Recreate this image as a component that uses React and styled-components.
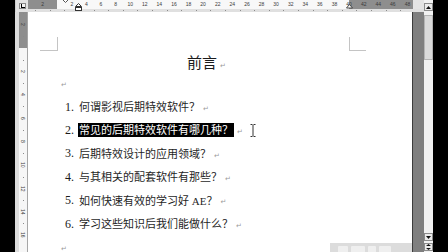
import React from "react";
import styled, { createGlobalStyle } from "styled-components";

const GlobalStyle = createGlobalStyle`
  html, body {
    margin: 0;
    padding: 0;
    background: #000;
  }
  body {
    width: 448px;
    height: 252px;
    overflow: hidden;
    font-family: "Liberation Serif", "Noto Sans CJK SC", serif;
  }
`;

const UNIT = 7.3;
const VUNIT = 11.7;

const Screen = styled.div`
  width: 448px;
  height: 252px;
  display: flex;
  background: #000;
  overflow: hidden;
`;

const SideBlack = styled.div`
  flex: none;
  width: ${(p) => p.w}px;
  background: #000;
`;

const Workspace = styled.div`
  flex: none;
  width: 409px;
  display: flex;
  flex-direction: column;
`;

const RulerBar = styled.div`
  flex: none;
  height: 12px;
  display: flex;
`;

const Corner = styled.div`
  flex: none;
  width: 13px;
  background: #e2e2e2;
  border-left: 1px solid #cfcfcf;
  box-sizing: border-box;
  display: flex;
  justify-content: center;
  padding-top: 3px;
`;

const TabSelector = styled.div`
  width: 7px;
  height: 6px;
  box-sizing: border-box;
  border: 1px solid #8a8a8a;
  background: #f4f4f4;
  position: relative;
  &::after {
    content: "";
    position: absolute;
    left: 1px;
    top: 0px;
    width: 3px;
    height: 3px;
    border-left: 1px solid #000;
    border-bottom: 1px solid #000;
  }
`;

const HRuler = styled.div`
  flex: 1;
  position: relative;
  overflow: hidden;
  display: flex;
  flex-direction: column;
  background: #e4e4e4;
`;

const Band = styled.div`
  height: 8.5px;
  display: flex;
  background: linear-gradient(
    to right,
    #8e8e8e 0 29.5px,
    #f8f8f8 29.5px 321.5px,
    #8e8e8e 321.5px 385px,
    #e4e4e4 385px
  );
`;

const Strip = styled.div`
  height: 3.5px;
  display: flex;
  background: #e0e0e0;
`;

const RulerCell = styled.div`
  flex: none;
  width: ${(p) => p.w}px;
  display: flex;
  justify-content: center;
  align-items: center;
  font-family: "Liberation Sans", Arial, sans-serif;
  font-size: 5px;
  line-height: 8px;
  color: #3a3a3a;
`;

const TickCell = styled.div`
  flex: none;
  width: ${(p) => p.w}px;
  position: relative;
  &::before {
    content: "";
    position: absolute;
    left: 0;
    top: 1px;
    width: 1px;
    height: 1.5px;
    background: ${(p) => (p.tick ? "#8a8a8a" : "transparent")};
  }
`;

const Marker = styled.svg`
  position: absolute;
  left: ${(p) => p.x}px;
  top: ${(p) => p.y}px;
`;

const Body = styled.div`
  flex: 1;
  display: flex;
  min-height: 0;
`;

const VRuler = styled.div`
  flex: none;
  width: 8px;
  border-left: 4px solid #dcdcdc;
  border-right: 1px solid #a6a6a6;
  background: linear-gradient(to bottom, #8e8e8e 0 36px, #f6f6f6 36px);
  display: flex;
  flex-direction: column;
  padding-top: 0.9px;
  overflow: hidden;
`;

const VCell = styled.div`
  flex: none;
  height: ${VUNIT * 2}px;
  display: flex;
  align-items: center;
  justify-content: center;
  position: relative;
  font-family: "Liberation Sans", Arial, sans-serif;
  font-size: 5px;
  color: #3a3a3a;
  writing-mode: vertical-rl;
  &::before {
    content: "";
    position: absolute;
    top: 0;
    left: 3.5px;
    width: 1.5px;
    height: 1px;
    background: #8a8a8a;
  }
`;

const Page = styled.div`
  flex: none;
  width: 384px;
  background: #fff;
  position: relative;
  overflow: hidden;
  padding: 34px 0 0 30px;
  box-sizing: border-box;
`;

const Content = styled.div`
  width: 291px;
  position: relative;
  &::before {
    content: "";
    position: absolute;
    left: -18px;
    top: -14px;
    width: 17px;
    height: 13px;
    border-right: 1px solid #c4c4c4;
    border-bottom: 1px solid #c4c4c4;
  }
  &::after {
    content: "";
    position: absolute;
    left: 100%;
    top: -14px;
    width: 16px;
    height: 13px;
    border-left: 1px solid #c4c4c4;
    border-bottom: 1px solid #c4c4c4;
  }
`;

const Title = styled.div`
  margin-top: 5px;
  height: 21px;
  line-height: 21px;
  text-align: center;
  padding-left: 6px;
  font-family: "Noto Sans CJK SC", "Liberation Sans", sans-serif;
  font-size: 15px;
  color: #1a1a1a;
`;

const Line = styled.div`
  height: 23.4px;
  display: flex;
  align-items: center;
  padding-left: ${(p) => p.indent || 0}px;
`;

const Num = styled.span`
  flex: none;
  width: 14px;
  font-family: "Liberation Serif", serif;
  font-size: 12px;
  color: #1a1a1a;
`;

const Text = styled.span`
  font-family: "Liberation Serif", "Noto Sans CJK SC", serif;
  font-size: 11px;
  line-height: 14px;
  height: 14px;
  color: ${(p) => (p.selected ? "#fff" : "#1f1f1f")};
  background: ${(p) => (p.selected ? "#000" : "transparent")};
  padding: ${(p) => (p.selected ? "0 1px 0 1px" : "0")};
  margin-left: ${(p) => (p.selected ? "-1px" : "0")};
  white-space: nowrap;
`;

const ParaMark = styled.span`
  font-family: "DejaVu Sans", sans-serif;
  font-size: 7px;
  color: #9a9a9a;
  margin-left: 3px;
  align-self: flex-end;
  margin-bottom: 6px;
`;

const IBeam = styled.svg`
  flex: none;
  margin-left: 7px;
`;

const Watermark = styled.div`
  position: absolute;
  right: 0;
  bottom: 0;
  width: 82px;
  height: 9px;
  background: #dcdcdc;
  display: flex;
  align-items: flex-end;
  gap: 3px;
  padding-left: 8px;
  box-sizing: border-box;
`;

const WaterBlock = styled.div`
  width: ${(p) => p.w}px;
  height: 6px;
  background: #efefef;
  border-radius: 1px 1px 0 0;
`;

const Gutter = styled.div`
  flex: none;
  width: 12px;
  box-sizing: border-box;
  background: #7f7f7f;
  border-left: 1px solid #3c3c3c;
`;

const Scrollbar = styled.div`
  flex: none;
  width: 9px;
  background: #f2f2f2;
  display: flex;
  flex-direction: column;
  padding: 3px 0 1px;
  box-sizing: border-box;
`;

const ScrollBtn = styled.div`
  flex: none;
  height: 8px;
  margin-top: ${(p) => p.mt || 0}px;
  box-sizing: border-box;
  border: 1px solid #8c8c8c;
  background: #ececec;
  display: flex;
  align-items: center;
  justify-content: center;
`;

const Thumb = styled.div`
  flex: none;
  height: 45px;
  margin-top: 4px;
  box-sizing: border-box;
  background: #dadada;
  border: 1px solid #b4b4b4;
`;

const Track = styled.div`
  flex: 1;
`;

const Arrow = ({ up }) => (
  <svg width="5" height="3" viewBox="0 0 5 3">
    <polygon points={up ? "2.5,0 5,3 0,3" : "0,0 5,0 2.5,3"} fill="#111" />
  </svg>
);

const items = [
  "何谓影视后期特效软件？",
  "常见的后期特效软件有哪几种？",
  "后期特效设计的应用领域？",
  "与其相关的配套软件有那些？",
  "如何快速有效的学习好 AE？",
  "学习这些知识后我们能做什么？",
];

const rulerNums = [];
for (let n = -2; n <= 48; n += 2) rulerNums.push(n);
const vNums = [];
for (let n = -2; n <= 16; n += 2) vNums.push(n);

const App = () => {
  return (
    <Screen>
      <GlobalStyle />
      <SideBlack w={15} />
      <Workspace>
        <RulerBar>
          <Corner>
            <TabSelector />
          </Corner>
          <HRuler>
            <Band>
              <RulerCell w={UNIT} />
              {rulerNums.map((n) => (
                <RulerCell key={n} w={UNIT * 2}>
                  {n === 0 ? "" : Math.abs(n)}
                </RulerCell>
              ))}
            </Band>
            <Strip>
              <TickCell w={UNIT} />
              {rulerNums.map((n) => (
                <TickCell key={n} w={UNIT * 2} tick />
              ))}
            </Strip>
            <Marker x={34} y={-1} width="7" height="4" viewBox="0 0 7 4">
              <polygon points="0.5,0.5 6.5,0.5 3.5,3.5" fill="#fff" stroke="#555" strokeWidth="1" />
            </Marker>
            <Marker x={47} y={3} width="7" height="8" viewBox="0 0 7 8">
              <polygon points="3.5,0.5 6.5,3.5 0.5,3.5" fill="#fff" stroke="#333" strokeWidth="1" />
              <rect x="0.5" y="4.5" width="6" height="3" fill="#fff" stroke="#333" strokeWidth="1" />
            </Marker>
            <Marker x={318} y={4} width="7" height="5" viewBox="0 0 7 5">
              <polygon points="3.5,0.5 6.5,4 0.5,4" fill="#fff" stroke="#444" strokeWidth="1" />
            </Marker>
          </HRuler>
        </RulerBar>
        <Body>
          <VRuler>
            {vNums.map((n) => (
              <VCell key={n}>{n === 0 ? "" : Math.abs(n)}</VCell>
            ))}
          </VRuler>
          <Page>
            <Content>
              <Title>
                前言<ParaMark as="span">↵</ParaMark>
              </Title>
              <Line>
                <ParaMark>↵</ParaMark>
              </Line>
              {items.map((t, i) => (
                <Line key={i} indent={7}>
                  <Num>{i + 1}.</Num>
                  <Text selected={i === 1}>{t}</Text>
                  <ParaMark>↵</ParaMark>
                  {i === 1 && (
                    <IBeam width="6" height="13" viewBox="0 0 6 13">
                      <path d="M0.5 0.5h2M3.5 0.5h2M3 1v11M0.5 12.5h2M3.5 12.5h2" stroke="#333" strokeWidth="1" fill="none" />
                    </IBeam>
                  )}
                </Line>
              ))}
              <Line>
                <ParaMark>↵</ParaMark>
              </Line>
            </Content>
            <Watermark>
              <WaterBlock w={10} />
              <WaterBlock w={14} />
              <WaterBlock w={8} />
              <WaterBlock w={12} />
            </Watermark>
          </Page>
          <Gutter />
        </Body>
      </Workspace>
      <Scrollbar>
        <ScrollBtn>
          <Arrow up />
        </ScrollBtn>
        <Thumb />
        <Track />
        <ScrollBtn>
          <Arrow />
        </ScrollBtn>
        <ScrollBtn mt={2}>
          <svg width="5" height="6" viewBox="0 0 5 6">
            <polygon points="2.5,0 5,2 0,2" fill="#111" />
            <polygon points="0,4 5,4 2.5,6" fill="#111" />
          </svg>
        </ScrollBtn>
      </Scrollbar>
      <SideBlack w={15} />
    </Screen>
  );
};

export default App;
